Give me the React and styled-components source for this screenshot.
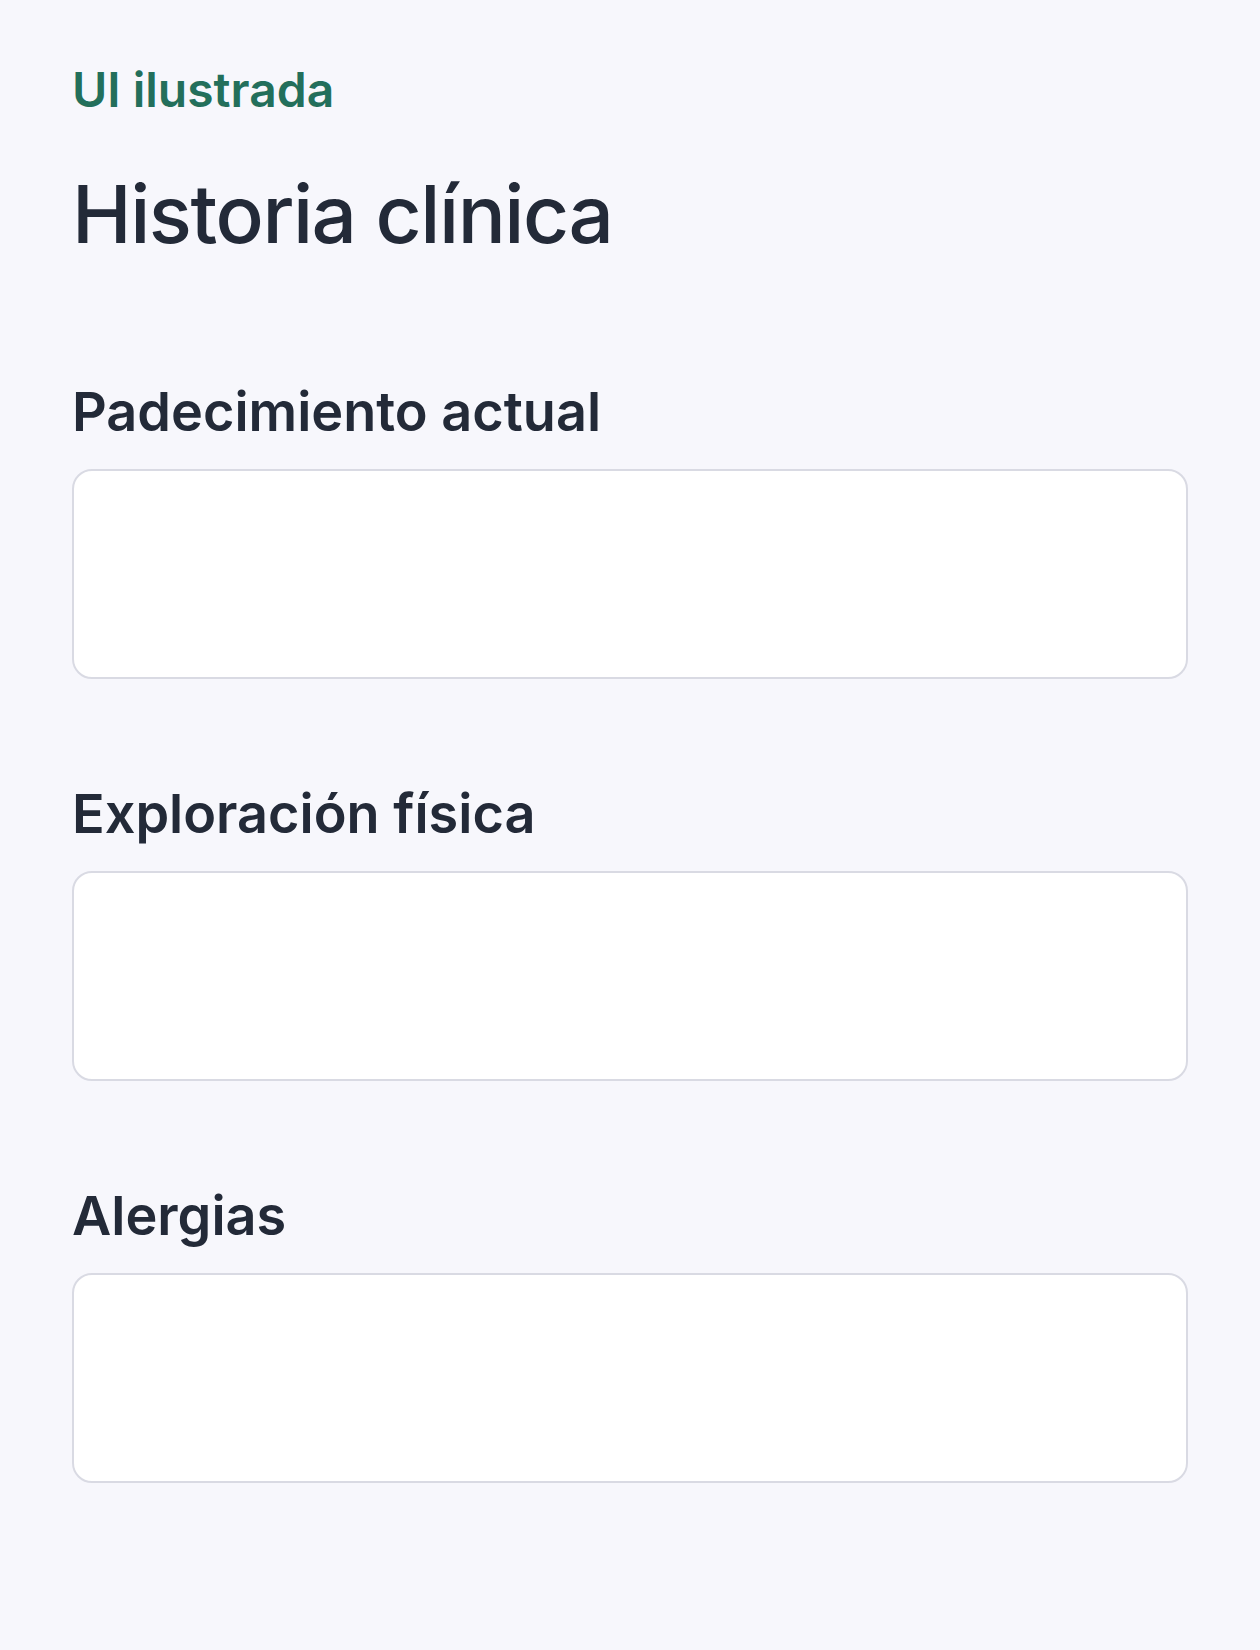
import React from 'react';
import styled, { createGlobalStyle } from 'styled-components';

const GlobalStyle = createGlobalStyle`
  html, body {
    margin: 0;
    padding: 0;
    background: #f7f7fc;
  }
  body {
    font-family: Inter, "Noto Sans", "Liberation Sans", sans-serif;
    color: #232a38;
  }
`

const Page = styled.main`
  min-height: 1650px;
  box-sizing: border-box;
  padding: 61px 72px 0;
  background: #f7f7fc;
`

const Eyebrow = styled.div`
  font-size: 48px;
  line-height: 58px;
  font-weight: 600;
  color: #236f5b;
`

const Title = styled.h1`
  margin: 47px 0 0;
  font-size: 80px;
  line-height: 96px;
  font-weight: 500;
  letter-spacing: -0.018em;
  color: #232a38;
`

const Form = styled.form`
  display: flex;
  flex-direction: column;
  gap: 102px;
  margin-top: 117px;
`

const Field = styled.div`
  display: flex;
  flex-direction: column;
  gap: 24px;
`

const Label = styled.label`
  font-size: 54px;
  line-height: 66px;
  font-weight: 600;
  color: #232a38;
`

const Box = styled.textarea`
  display: block;
  box-sizing: border-box;
  width: 100%;
  height: 210px;
  margin: 0;
  padding: 20px 24px;
  border: 2px solid #d9dae3;
  border-radius: 20px;
  background: #ffffff;
  font: inherit;
  font-size: 40px;
  resize: none;
  outline: none;
`

const fields = [
  { id: 'padecimiento', label: 'Padecimiento actual' },
  { id: 'exploracion', label: 'Exploración física' },
  { id: 'alergias', label: 'Alergias' },
]

const App = () => {
  return (
    <>
      <GlobalStyle />
      <Page>
        <Eyebrow>UI ilustrada</Eyebrow>
        <Title>Historia clínica</Title>
        <Form>
          {fields.map((f) => (
            <Field key={f.id}>
              <Label htmlFor={f.id}>{f.label}</Label>
              <Box id={f.id} />
            </Field>
          ))}
        </Form>
      </Page>
    </>
  )
}

export default App;
